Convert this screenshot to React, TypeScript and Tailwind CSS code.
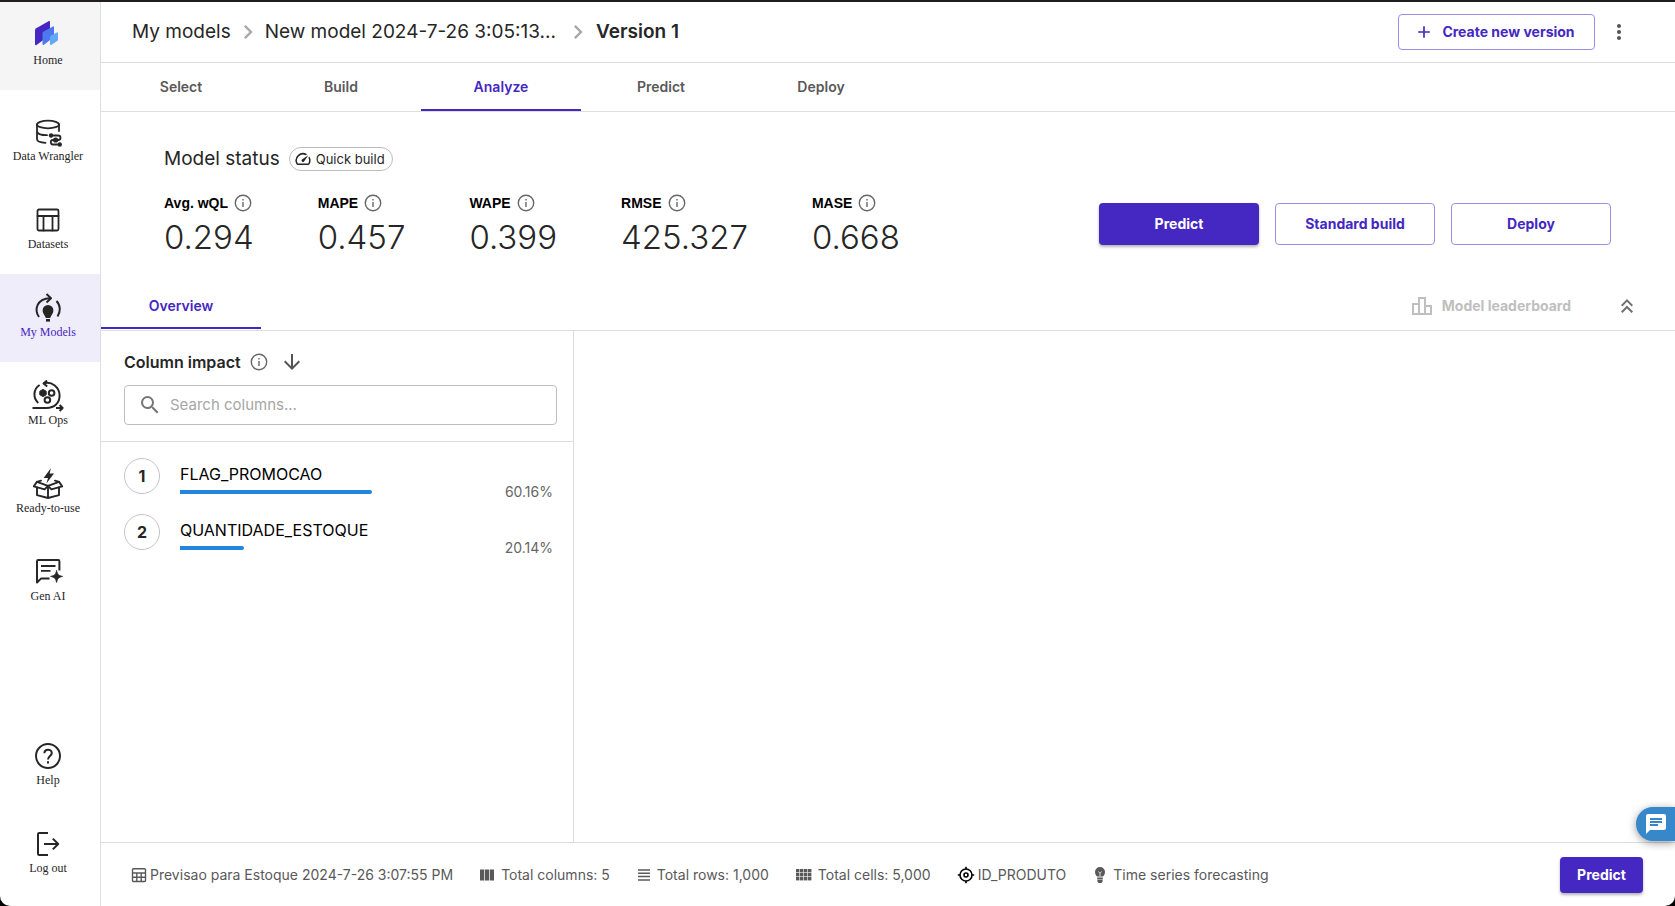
import React from "react";
import {
  MdAdd,
  MdArrowDownward,
  MdChat,
  MdChevronRight,
  MdKeyboardDoubleArrowUp,
  MdMoreVert,
  MdOutlineLeaderboard,
  MdOutlineSpeed,
  MdSearch,
} from "react-icons/md";

type IconProps = { className?: string };

const stroke = {
  fill: "none",
  stroke: "currentColor",
  strokeWidth: 2,
  strokeLinecap: "round" as const,
  strokeLinejoin: "round" as const,
};

function HomeLogo() {
  return (
    <svg viewBox="0 3 32 32" className="size-8" aria-hidden="true">
      <path d="M3 13.5 Q3 12 4.2 11.2 L17 4 Q18 3.6 18 5 V18 L4.5 28 Q3 28.8 3 27 Z" fill="#4527c2" />
      <path d="M10.5 16.5 Q10.5 15 11.6 14.4 L21 9.4 Q22 9 22 10.4 V20 L12 27.8 Q10.5 28.6 10.5 27 Z" fill="#4c78f0" />
      <path d="M18 20.5 Q18 19.2 19 18.6 L25 15.4 Q26 15 26 16.2 V22.4 Q26 23.4 25.2 24 L19.5 27.8 Q18 28.4 18 27 Z" fill="#64a8f8" />
    </svg>
  );
}

function WranglerIcon() {
  return (
    <svg viewBox="0 0 32 32" className="size-8" {...stroke} strokeWidth={1.8} aria-hidden="true">
      <ellipse cx="16" cy="8.5" rx="11" ry="3.8" />
      <path d="M5 8.5 V23 C5 25.5 9 26.6 13.5 26.8 M5 15.5 C5.4 18 10 19.2 15 19.2 M27 8.5 V15" />
      <path d="M19 19.5 H26 Q28.5 19.5 28.5 21.7 Q28.5 24 26 24 H21 Q18.8 24 18.8 26 Q18.8 28.5 21 28.5 H27" />
      <g fill="currentColor" stroke="none">
        <circle cx="19" cy="19.5" r="2.2" />
        <circle cx="23.6" cy="24" r="2.6" />
        <circle cx="27.8" cy="28.5" r="2.2" />
      </g>
    </svg>
  );
}

function DatasetsIcon() {
  return (
    <svg viewBox="0 0 32 32" className="size-8" {...stroke} strokeWidth={1.8} aria-hidden="true">
      <rect x="5.5" y="5.5" width="21" height="21" rx="1.5" />
      <path d="M5.5 12 H26.5 M11.5 12 V26.5 M20.5 12 V26.5" />
    </svg>
  );
}

function ModelsIcon() {
  return (
    <svg viewBox="0 1 32 32" className="size-8" {...stroke} strokeLinecap="butt" aria-hidden="true">
      <path d="M7 26 C2 19 4.5 7.6 18 7.2" />
      <path d="M14.5 3 L19 7.2 L14.5 11.4" />
      <path d="M24.5 10 C28.8 14.5 28.6 21 25.5 25.5" />
      <g fill="currentColor" stroke="none">
        <path d="M16 14 a5.4 5.4 0 0 1 5.4 5.4 c0 3-2.2 4.2-3.2 7.6 h-4.4 c-1-3.4-3.2-4.6-3.2-7.6 A5.4 5.4 0 0 1 16 14 Z" />
        <rect x="14" y="28" width="4" height="2.6" />
      </g>
    </svg>
  );
}

function OpsIcon() {
  return (
    <svg viewBox="0 1 32 32" className="size-8" {...stroke} strokeLinecap="butt" aria-hidden="true">
      <path d="M6.2 24 C0.5 18.5 1.5 10 7.6 6" />
      <path d="M11.5 4.4 C20 2 27.6 8.5 27.6 16.5 C27.6 24 22.5 29 14.5 29 H0.5" />
      <path d="M15 1.5 L11.6 4.5 L15.2 7.6" />
      <path d="M24 29 H30 M27.6 26 L30.6 29 L27.6 32" />
      <circle cx="19.6" cy="14" r="2.8" strokeWidth="2" />
      <circle cx="15.4" cy="21" r="2.8" strokeWidth="2" />
      <path d="M11 10.4 L14.2 12.2 V15.8 L11 17.6 L7.8 15.8 V12.2 Z" fill="currentColor" strokeWidth="1" />
    </svg>
  );
}

function ReadyIcon() {
  return (
    <svg viewBox="0 1 32 32" className="size-8" {...stroke} strokeWidth={1.9} aria-hidden="true">
      <path d="M19 1 L11.6 11 H16 L14.4 16.4 L22 6.6 H17.6 Z" fill="currentColor" stroke="none" />
      <path d="M5 20.5 V28.2 L16 31 L27 28.2 V20.5 M16 19.4 V31" />
      <path d="M9 13.6 L5 14.8 L16 18.8 L27 14.8 L23 13.6" />
      <path d="M5 14.8 L1.8 19.4 L12.6 22.4 L16 18.8 L19.4 22.4 L30.2 19.4 L27 14.8" />
    </svg>
  );
}

function GenIcon() {
  return (
    <svg viewBox="0 1 32 32" className="size-8" {...stroke} strokeLinecap="butt" aria-hidden="true">
      <path d="M27.4 15.5 V6.2 Q27.4 5 26.2 5 H6.2 Q5 5 5 6.2 V27.5 L9 23.6 H17.5" />
      <path d="M9 11 H23.5 M9 15.8 H18.5" strokeWidth="1.8" />
      <path d="M24.6 15.4 C25.4 19.4 26.6 20.6 30.6 21.4 C26.6 22.2 25.4 23.4 24.6 27.4 C23.8 23.4 22.6 22.2 18.6 21.4 C22.6 20.6 23.8 19.4 24.6 15.4 Z" fill="currentColor" strokeWidth="0.8" />
    </svg>
  );
}

function HelpIcon() {
  return (
    <svg viewBox="0 0 32 32" className="size-8" {...stroke} strokeLinecap="butt" aria-hidden="true">
      <circle cx="16" cy="16" r="12" />
      <path d="M12.4 13.2 C12.4 8.6 19.8 8.4 19.8 13 C19.8 16 16 16.2 16 19.6" />
      <path d="M16 21.2 V23.4" />
    </svg>
  );
}

function LogoutIcon() {
  return (
    <svg viewBox="0 0 32 32" className="size-8" {...stroke} strokeLinecap="butt" aria-hidden="true">
      <path d="M16 5 H7.2 Q6 5 6 6.2 V25.8 Q6 27 7.2 27 H16" />
      <path d="M12 16 H26 M20.8 10.6 L26.2 16 L20.8 21.4" />
    </svg>
  );
}

function InfoIcon({ className = "" }: IconProps) {
  return (
    <svg viewBox="0 0 18 18" className={`size-[18px] text-[#666] ${className}`} fill="none" stroke="currentColor" strokeWidth="1.4" aria-hidden="true">
      <circle cx="9" cy="9" r="7.7" />
      <path d="M9 8 V13 M9 5 V6.6" />
    </svg>
  );
}

function SheetIcon() {
  return (
    <svg viewBox="0 0 16 16" className="size-4" fill="none" stroke="currentColor" strokeWidth="1.4" aria-hidden="true">
      <rect x="1.5" y="1.7" width="13" height="12.8" rx="1" />
      <path d="M1.5 6 H14.5 M1.5 10.2 H14.5 M5.8 6 V14.5 M10.2 6 V14.5" />
    </svg>
  );
}

function ColumnsIcon() {
  return (
    <svg viewBox="0 0 16 16" className="size-4" fill="currentColor" aria-hidden="true">
      <path d="M1 2.5 H5.2 V13.5 H1 Z M5.9 2.5 H10.1 V13.5 H5.9 Z M10.8 2.5 H15 V13.5 H10.8 Z" />
    </svg>
  );
}

function RowsIcon() {
  return (
    <svg viewBox="0 0 16 16" className="size-4" fill="none" stroke="currentColor" strokeWidth="1.5" aria-hidden="true">
      <path d="M2 3 H14 M2 6.3 H14 M2 9.6 H14 M2 12.9 H14" />
    </svg>
  );
}

function CellsIcon() {
  return (
    <svg viewBox="0 0 18 16" className="h-4 w-[18px]" fill="currentColor" aria-hidden="true">
      {[2, 6, 10].map((y) =>
        [1, 5, 9, 13].map((x) => <rect key={`${x}-${y}`} x={x} y={y} width="3.4" height="3.4" />),
      )}
    </svg>
  );
}

function TargetIcon() {
  return (
    <svg viewBox="0 0 18 18" className="size-[18px] text-black" fill="none" stroke="currentColor" strokeWidth="1.6" aria-hidden="true">
      <circle cx="9" cy="9" r="6" />
      <circle cx="9" cy="9" r="2" />
      <path d="M9 0.8 V3 M9 15 V17.2 M0.8 9 H3 M15 9 H17.2" />
    </svg>
  );
}

function BulbIcon() {
  return (
    <svg viewBox="0 0 16 16" className="size-4" aria-hidden="true">
      <path d="M8 0 a5 5 0 0 1 5 5 c0 2-1 3.4-2 4.6 h-6 c-1-1.2-2-2.6-2-4.6 A5 5 0 0 1 8 0 Z M5.2 10.4 H10.8 V12.4 H5.2 Z M5.4 13 H10.6 V14.4 L9.4 16 H6.6 L5.4 14.4 Z" fill="currentColor" />
      <path d="M6.3 4.6 L8 6.2 L9.7 4.6 M8 6.2 V9" fill="none" stroke="#fff" strokeWidth="0.8" />
    </svg>
  );
}

type NavEntry = { label: string; icon: React.ReactNode; state?: "home" | "active" };

const mainNav: NavEntry[] = [
  { label: "Data Wrangler", icon: <WranglerIcon /> },
  { label: "Datasets", icon: <DatasetsIcon /> },
  { label: "My Models", icon: <ModelsIcon />, state: "active" },
  { label: "ML Ops", icon: <OpsIcon /> },
  { label: "Ready-to-use", icon: <ReadyIcon /> },
  { label: "Gen AI", icon: <GenIcon /> },
];

const bottomNav: NavEntry[] = [
  { label: "Help", icon: <HelpIcon /> },
  { label: "Log out", icon: <LogoutIcon /> },
];

function NavItem({ label, icon, state }: NavEntry) {
  const bg = state === "home" ? "bg-[#f5f5f5]" : state === "active" ? "bg-[#f0edfb]" : "";
  const text = state === "active" ? "text-[#4527c2]" : "text-[#262626]";
  return (
    <a href="#" className={`flex h-[88px] flex-col items-center pt-[18px] pr-1 text-[#262626] ${bg}`}>
      {icon}
      <span className={`font-['Liberation_Serif',serif] text-[12px] leading-4 ${text}`}>{label}</span>
    </a>
  );
}

const tabs = ["Select", "Build", "Analyze", "Predict", "Deploy"];

const metrics = [
  { name: "Avg. wQL", value: "0.294" },
  { name: "MAPE", value: "0.457" },
  { name: "WAPE", value: "0.399" },
  { name: "RMSE", value: "425.327" },
  { name: "MASE", value: "0.668" },
];

const columns = [
  { name: "FLAG_PROMOCAO", impact: 60.16 },
  { name: "QUANTIDADE_ESTOQUE", impact: 20.14 },
];

const facts = [
  { icon: <SheetIcon />, label: "Previsao para Estoque 2024-7-26 3:07:55 PM", gap: "gap-[3px]" },
  { icon: <ColumnsIcon />, label: "Total columns: 5", gap: "gap-[6px]" },
  { icon: <RowsIcon />, label: "Total rows: 1,000", gap: "gap-[5px]" },
  { icon: <CellsIcon />, label: "Total cells: 5,000", gap: "gap-[5px]" },
  { icon: <TargetIcon />, label: "ID_PRODUTO", gap: "gap-[3px]" },
  { icon: <BulbIcon />, label: "Time series forecasting", gap: "gap-[5px]" },
];

const outlined = "rounded border border-[#9d8de6] bg-white text-[14px] leading-5 font-bold text-[#4527c2]";
const filled = "rounded bg-[#4527c2] text-[14px] leading-5 font-bold text-white shadow-[0_2px_3px_rgba(0,0,0,0.3)]";

export default function App() {
  return (
    <div className="min-h-screen bg-black font-[Inter,sans-serif] text-[#262626]">
      <div className="flex min-h-screen overflow-hidden rounded-b-[10px] border-t-2 border-[#201c20] bg-white">
        <nav aria-label="Main" className="flex w-[101px] shrink-0 flex-col border-r border-[#dedede] pb-2">
          <NavItem label="Home" icon={<HomeLogo />} state="home" />
          <div className="pt-2">
            {mainNav.map((item) => (
              <NavItem key={item.label} {...item} />
            ))}
          </div>
          <div className="mt-auto">
            {bottomNav.map((item) => (
              <NavItem key={item.label} {...item} />
            ))}
          </div>
        </nav>

        <div className="flex min-w-0 flex-1 flex-col">
          <header className="flex h-[61px] items-center border-b border-[#dedede] pr-11 pl-[31px]">
            <nav aria-label="Breadcrumb" className="flex items-center text-[19px] leading-6">
              <a href="#">My models</a>
              <MdChevronRight className="mx-[3px] size-7 text-[#a8a8a8]" />
              <a href="#">New model 2024-7-26 3:05:13...</a>
              <MdChevronRight className="mr-1 ml-2 size-7 text-[#a8a8a8]" />
              <span className="font-semibold">Version 1</span>
            </nav>
            <button type="button" className={`ml-auto flex h-9 w-[197px] items-center justify-center gap-2 pr-1 ${outlined}`}>
              <MdAdd className="size-5" />
              Create new version
            </button>
            <button type="button" aria-label="More options" className="ml-3 text-[#545454]">
              <MdMoreVert className="size-6" />
            </button>
          </header>

          <div role="tablist" className="flex h-[49px] border-b border-[#dedede]">
            {tabs.map((tab) => (
              <button
                key={tab}
                type="button"
                role="tab"
                aria-selected={tab === "Analyze"}
                className={`w-40 border-b-2 text-[14px] font-semibold ${
                  tab === "Analyze" ? "border-b-[#4527c2] text-[#4527c2]" : "border-b-transparent text-[#595959]"
                }`}
              >
                {tab}
              </button>
            ))}
          </div>

          <section className="pt-[35px] pr-16 pl-[63px]">
            <div className="flex items-center gap-[9px]">
              <h1 className="text-[19px] leading-6">Model status</h1>
              <span className="flex h-6 items-center gap-1 rounded-full border border-[#bdbdbd] pr-[7px] pl-1 text-[13px] leading-4">
                <MdOutlineSpeed className="size-[18px]" />
                Quick build
              </span>
            </div>
            <div className="flex items-start justify-between pt-[22px]">
              <dl className="flex gap-16">
                {metrics.map((m) => (
                  <div key={m.name}>
                    <dt className="flex items-center gap-[6px] font-['Liberation_Sans',sans-serif] text-[14px] leading-5 font-bold text-black">
                      {m.name}
                      <InfoIcon />
                    </dt>
                    <dd className="pt-1 text-[33px] leading-10 font-light">{m.value}</dd>
                  </div>
                ))}
              </dl>
              <div className="flex gap-4 pt-[10px]">
                <button type="button" className={`h-[42px] w-40 ${filled}`}>Predict</button>
                <button type="button" className={`h-[42px] w-40 ${outlined}`}>Standard build</button>
                <button type="button" className={`h-[42px] w-40 ${outlined}`}>Deploy</button>
              </div>
            </div>
          </section>

          <div className="mt-6 flex h-[50px] items-stretch border-b border-[#dedede] pr-9">
            <button type="button" role="tab" aria-selected="true" className="mb-px w-40 border-y-2 border-t-transparent border-b-[#4527c2] text-[14px] font-semibold text-[#4527c2]">
              Overview
            </button>
            <button type="button" disabled className="ml-auto flex items-center gap-2 text-[14px] font-bold text-[#bfbfbf]">
              <MdOutlineLeaderboard className="size-6" />
              Model leaderboard
            </button>
            <button type="button" aria-label="Collapse" className="ml-11 text-[#707070]">
              <MdKeyboardDoubleArrowUp className="size-6" />
            </button>
          </div>

          <main className="flex flex-1">
            <section className="w-[473px] shrink-0 border-r border-[#dedede]">
              <div className="border-b border-[#dedede] pt-[19px] pr-4 pb-4 pl-[23px]">
                <div className="flex h-6 items-center">
                  <h2 className="text-[16px] leading-6 font-semibold">Column impact</h2>
                  <InfoIcon className="ml-[9px]" />
                  <button type="button" aria-label="Sort descending" className="ml-3 text-[#545454]">
                    <MdArrowDownward className="size-6" />
                  </button>
                </div>
                <label className="mt-[11px] flex h-10 items-center gap-2 rounded border border-[#bdbdbd] pl-[13px]">
                  <MdSearch className="size-6 text-[#757575]" />
                  <input
                    type="text"
                    aria-label="Search columns"
                    placeholder="Search columns..."
                    className="min-w-0 flex-1 text-[15px] leading-6 outline-none placeholder:text-[#a6a6a6]"
                  />
                </label>
              </div>
              <ol className="flex flex-col gap-5 pt-4 pr-5 pl-[23px]">
                {columns.map((c, i) => (
                  <li key={c.name} className="flex h-9">
                    <span className="flex size-9 shrink-0 items-center justify-center rounded-full border border-[#c4c4c4] text-[16px] font-bold">
                      {i + 1}
                    </span>
                    <div className="ml-5 w-[319px] shrink-0 pt-1">
                      <div className="text-[16px] leading-6 text-black">{c.name}</div>
                      <div className="mt-1 h-1 rounded-r-full bg-[#2186dc]" style={{ width: `${c.impact}%` }} />
                    </div>
                    <span className="ml-auto shrink-0 pt-6 text-[14px] leading-5 text-[#666]">{c.impact}%</span>
                  </li>
                ))}
              </ol>
            </section>
            <section className="flex-1" />
          </main>

          <footer className="flex h-16 items-center border-t border-[#dedede] pr-8 pl-[30px]">
            <ul className="flex gap-[26px] text-[14px] leading-5 text-[#595959]">
              {facts.map((f) => (
                <li key={f.label} className={`flex items-center ${f.gap}`}>
                  {f.icon}
                  {f.label}
                </li>
              ))}
            </ul>
            <button type="button" className={`ml-auto h-9 w-[83px] ${filled}`}>Predict</button>
          </footer>
        </div>
      </div>
      <button
        type="button"
        aria-label="Open chat"
        className="fixed right-0 bottom-[65px] flex h-[34px] w-[39px] items-center justify-center rounded-l-full bg-[#3787cb] text-white shadow-[0_2px_8px_rgba(0,0,0,0.4)]"
      >
        <MdChat className="size-6" />
      </button>
    </div>
  );
}
